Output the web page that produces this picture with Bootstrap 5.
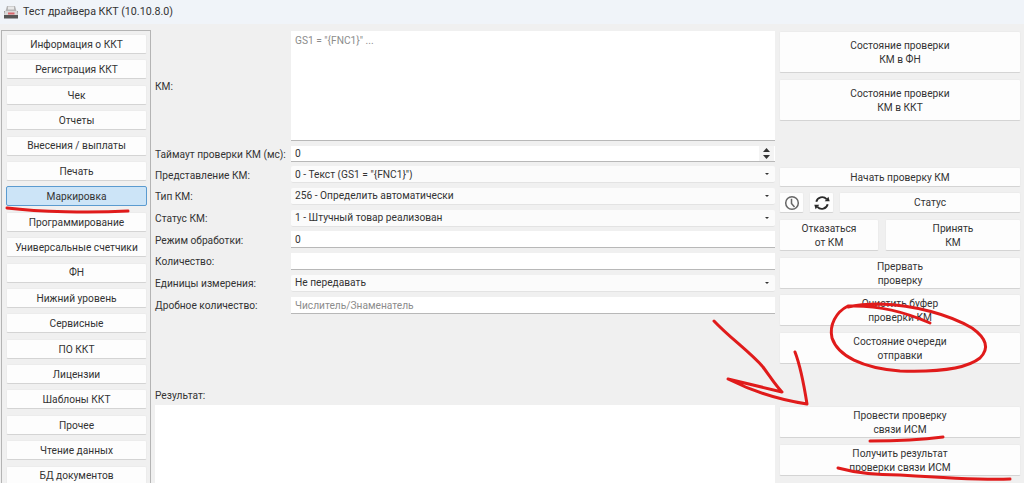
<!DOCTYPE html>
<html lang="ru">
<head>
<meta charset="utf-8">
<title>Тест драйвера ККТ</title>
<link href="https://cdn.jsdelivr.net/npm/bootstrap@5.3.0/dist/css/bootstrap.min.css" rel="stylesheet">
<style>
html,body{height:483px;overflow:hidden}
body{background:#f0f0f0;font-family:Roboto,"Liberation Sans",sans-serif;font-size:10.2px;color:#333;position:relative}
.ttl{height:24px;background:#f0f4f9;padding-left:3px;gap:4px;font-size:10.7px;color:#333}
.shell{height:459px;overflow:hidden}
.side{width:150px;margin:6px 0 0 1px;padding:3px 3px 0 4px;border:1px solid #b4b4b4;border-bottom:0;gap:5.4px;flex:none;height:453px;overflow:hidden}
.qb{background:#fdfdfd;border:1px solid #ececec;border-bottom-color:#d4d4d4;border-radius:2px;font-size:10.2px;line-height:13.3px;color:#333;padding:1px 0 0;--bs-btn-hover-bg:#fdfdfd;display:flex;align-items:center;justify-content:center;text-align:center}
.side .qb{height:20px;flex:none}
.side .qb.on{background:#cce4f7;border-color:#5b9bd0}
.mid{width:620px;margin:7px 0 0 4px;flex:none}
.frm{display:grid;grid-template-columns:136px 484px;grid-template-rows:110px 16px 17px 17px 17px 17px 17px 17px 17px;row-gap:4.7px;align-items:center}
.fld{height:100%;border:0;border-bottom:1px solid #b8b8b8;border-radius:0;background:#fff;font-size:10.2px;color:#333;padding:1px 4px 0;box-shadow:none;min-height:0;line-height:1}
.fld::placeholder{color:#8c8c8c}
textarea.fld{padding:5px 4px;resize:none;height:110px}
.sel{height:100%;min-height:0;border:0;border-bottom:1px solid #e3e3e3;border-radius:2px;background-color:#fbfbfb;background-image:url("data:image/svg+xml,%3Csvg xmlns='http://www.w3.org/2000/svg' viewBox='0 0 6 4'%3E%3Cpath d='M1 1h4L3 3z' fill='%23333'/%3E%3C/svg%3E");background-size:6px 4px;background-position:right 5px center;font-size:10.2px;color:#333;padding:1px 14px 0 4px;line-height:1}
.spinbox{height:100%;background:#fff;border-bottom:1px solid #b8b8b8}
.spinbox .fld{border:0;background:transparent}
.spn{width:15px;margin-right:1px;gap:1px;flex:none;background:#f4f4f4;padding:1px 0}
.spn i{flex:1;display:flex;align-items:center;justify-content:center}
.spn svg{display:block}
.lbl{margin:0;padding-top:1px;font-size:10.2px;color:#333;white-space:nowrap}
.rs{margin-top:74px;height:20px;line-height:14px}
.rsbox{height:90px;background:#fff}
.rt{width:242px;margin:7px 0 0 4px;flex:none;height:452px}
.rt .h42{height:42px;flex:none}
.rt .h20{height:20px;flex:none}
.rt .h21{height:21px;flex:none}
.rt .h32{height:32px;flex:none}
.icb{width:25px}
.ovl{position:absolute;left:0;top:0;pointer-events:none}
</style>
</head>
<body>
<div class="ttl d-flex align-items-center">
<svg width="16" height="15" viewBox="0 0 16 15"><path d="M4 1h8l1.500 5h-11z" fill="#b5b5b5"/><path d="M5 1.500h6v3H5z" fill="#e8e8e8"/><path d="M1 6h14v7.500H1z" fill="#555"/><path d="M1.500 6h13l.5 4H1z" fill="#d8d8d8"/><path d="M5 7.500h6.500v2H5z" fill="#d9646b"/></svg>
<span>Тест драйвера ККТ (10.10.8.0)</span>
</div>
<div class="shell d-flex">
<nav class="side d-flex flex-column">
<button class="btn qb">Информация о ККТ</button>
<button class="btn qb">Регистрация ККТ</button>
<button class="btn qb">Чек</button>
<button class="btn qb">Отчеты</button>
<button class="btn qb">Внесения / выплаты</button>
<button class="btn qb">Печать</button>
<button class="btn qb on">Маркировка</button>
<button class="btn qb">Программирование</button>
<button class="btn qb">Универсальные счетчики</button>
<button class="btn qb">ФН</button>
<button class="btn qb">Нижний уровень</button>
<button class="btn qb">Сервисные</button>
<button class="btn qb">ПО ККТ</button>
<button class="btn qb">Лицензии</button>
<button class="btn qb">Шаблоны ККТ</button>
<button class="btn qb">Прочее</button>
<button class="btn qb">Чтение данных</button>
<button class="btn qb">БД документов</button>
</nav>
<main class="mid d-flex flex-column">
<div class="frm">
<label class="lbl">КМ:</label>
<textarea class="form-control fld" placeholder='GS1 = "{FNC1}" ...'></textarea>
<label class="lbl">Таймаут проверки КМ (мс):</label>
<div class="spinbox d-flex">
<input class="form-control fld flex-grow-1" value="0">
<div class="spn d-flex flex-column"><i><svg width="7" height="4" viewBox="0 0 7 4"><path d="M3.500 0L7 4H0z" fill="#333"/></svg></i><i><svg width="7" height="4" viewBox="0 0 7 4"><path d="M0 0h7L3.500 4z" fill="#333"/></svg></i></div>
</div>
<label class="lbl">Представление КМ:</label>
<select class="form-select sel"><option>0 - Текст (GS1 = "{FNC1}")</option></select>
<label class="lbl">Тип КМ:</label>
<select class="form-select sel"><option>256 - Определить автоматически</option></select>
<label class="lbl">Статус КМ:</label>
<select class="form-select sel"><option>1 - Штучный товар реализован</option></select>
<label class="lbl">Режим обработки:</label>
<input class="form-control fld" value="0">
<label class="lbl">Количество:</label>
<input class="form-control fld">
<label class="lbl">Единицы измерения:</label>
<select class="form-select sel"><option>Не передавать</option></select>
<label class="lbl">Дробное количество:</label>
<input class="form-control fld" placeholder="Числитель/Знаменатель">
</div>
<label class="lbl rs">Результат:</label>
<div class="rsbox flex-grow-1"></div>
</main>
<aside class="rt d-flex flex-column">
<button class="btn qb h42">Состояние проверки<br>КМ в ФН</button>
<button class="btn qb h42" style="margin-top:6px">Состояние проверки<br>КМ в ККТ</button>
<button class="btn qb h20" style="margin-top:46px">Начать проверку КМ</button>
<div class="d-flex" style="gap:5px;margin-top:5px">
<button class="btn qb h21 icb" aria-label="Время"><svg width="16" height="16" viewBox="0 0 16 16" fill="none" stroke="#666" stroke-width="1.500"><circle cx="8" cy="8" r="6.300"/><path d="M7.500 3.800V8.500L10.500 12"/></svg></button>
<button class="btn qb h21 icb" aria-label="Обновить"><svg width="16" height="16" viewBox="0 0 16 16" fill="none" stroke="#2a2a2a" stroke-width="1.900"><path d="M2.300 6.800A6 6 0 0 1 12.600 4.200"/><path d="M13.700 9.200A6 6 0 0 1 3.400 11.800"/><path d="M10.700 6.300h5L14.400 1.800z" fill="#2a2a2a" stroke="none"/><path d="M5.300 9.700h-5L1.600 14.200z" fill="#2a2a2a" stroke="none"/></svg></button>
<button class="btn qb h21 flex-grow-1">Статус</button>
</div>
<div class="d-flex" style="gap:6px;margin-top:6px">
<button class="btn qb h32" style="width:100px">Отказаться<br>от КМ</button>
<button class="btn qb h32 flex-grow-1">Принять<br>КМ</button>
</div>
<button class="btn qb h32" style="margin-top:6px">Прервать<br>проверку</button>
<button class="btn qb h32" style="margin-top:5px">Очистить буфер<br>проверки КМ</button>
<button class="btn qb h32" style="margin-top:6px">Состояние очереди<br>отправки</button>
<button class="btn qb h32" style="margin-top:42px">Провести проверку<br>связи ИСМ</button>
<button class="btn qb h32" style="margin-top:6px">Получить результат<br>проверки связи ИСМ</button>
</aside>
</div>
<svg class="ovl" width="1024" height="483" viewBox="0 0 1024 483" fill="none" stroke="#e01b1b" stroke-width="3" stroke-linecap="round" stroke-linejoin="round">
<path d="M7 208C40 212 90 213 128 211"/>
<path d="M930 323C905 312 880 305 848 306C836 312 829 325 832 338C838 356 862 368 900 371C930 372 965 370 980 358C990 348 986 338 972 328C950 315 915 305 880 304C868 304 856 305 848 307"/>
<path d="M714 321C730 338 750 352 763 367C771 378 776 386 782 392L728 379C750 390 780 400 807 404C804 385 800 365 795 352"/>
<path d="M870 441C895 441 920 440 943 437"/>
<path d="M838 468C860 474 880 475 900 475C945 478 985 480 1010 479"/>
</svg>
<script src="https://cdn.jsdelivr.net/npm/bootstrap@5.3.0/dist/js/bootstrap.bundle.min.js"></script>
</body>
</html>
